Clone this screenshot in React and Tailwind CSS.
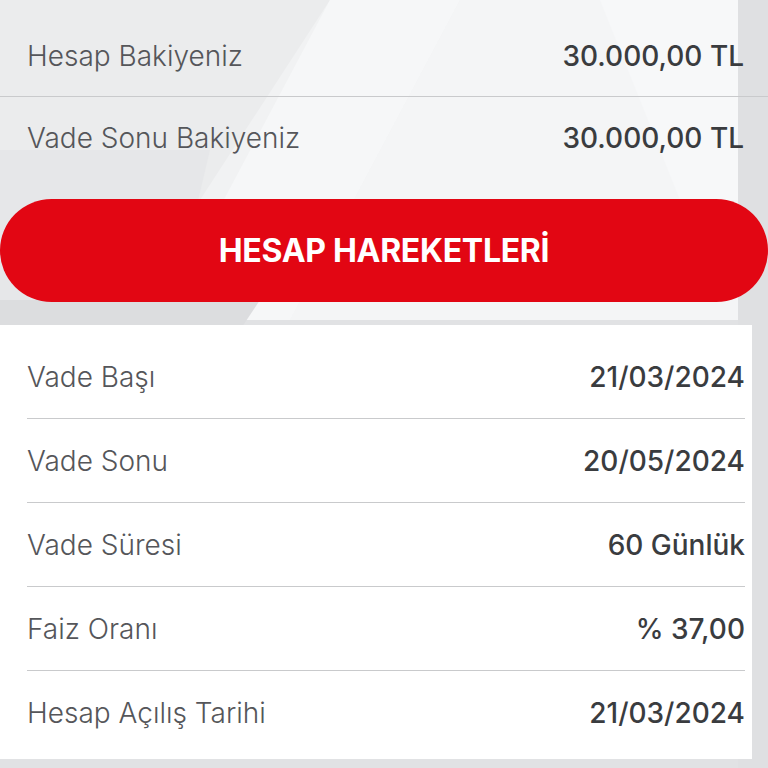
import React from "react";

const topRows = [
  { label: "Hesap Bakiyeniz", value: "30.000,00 TL" },
  { label: "Vade Sonu Bakiyeniz", value: "30.000,00 TL" },
];

const details = [
  { label: "Vade Başı", value: "21/03/2024" },
  { label: "Vade Sonu", value: "20/05/2024" },
  { label: "Vade Süresi", value: "60 Günlük" },
  { label: "Faiz Oranı", value: "% 37,00" },
  { label: "Hesap Açılış Tarihi", value: "21/03/2024" },
];

const Backdrop = () => (
  <svg
    className="absolute inset-0 w-full h-full"
    viewBox="0 0 768 768"
    preserveAspectRatio="none"
  >
    <rect x="0" y="0" width="768" height="768" fill="#e1e2e4" />
    <path d="M0 -20 H738 V320 H0 Z" fill="#f1f2f3" />
    <polygon points="0,0 330,0 200,200 0,200" fill="#ebeced" />
    <polygon points="330,0 460,0 290,320 160,320" fill="#f6f7f8" />
    <polygon points="460,0 738,0 738,320 290,320" fill="#f4f5f6" />
    <polygon points="0,150 210,150 170,320 0,320" fill="#e6e7e9" />
    <polygon points="600,0 738,0 738,200 680,200" fill="#f7f8f9" />
    <rect x="738" y="0" width="30" height="768" fill="#dfe0e2" />
    <polygon points="0,300 260,300 240,330 0,330" fill="#dcdddf" />
  </svg>
);

const App = () => {
  return (
    <div
      className="relative w-[768px] h-[768px] overflow-hidden"
      style={{ fontFamily: "Inter, 'Liberation Sans', sans-serif" }}
    >
      <Backdrop />
      <div className="relative flex flex-col">
        <div className="pt-[15px]">
          {topRows.map((row, i) => (
            <div
              key={row.label}
              className={
                i === 0
                  ? "h-[82px] flex items-center justify-between pl-[27px] pr-[24px] border-b border-[#c9cacc]"
                  : "h-[82px] flex items-center justify-between pl-[27px] pr-[24px]"
              }
            >
              <span className="text-[28px] font-light text-[#55565a]">
                {row.label}
              </span>
              <span className="text-[28px] font-medium text-[#3a3c3f]">
                {row.value}
              </span>
            </div>
          ))}
        </div>
        <button
          type="button"
          className="mt-[20px] h-[103px] w-[768px] rounded-full bg-[#e20613] text-white text-[32px] font-bold tracking-[-0.3px] flex items-center justify-center"
        >
          HESAP HAREKETLERİ
        </button>
        <div className="mt-[23px] w-[752px] bg-white pt-[10px] pb-[5px] pl-[27px] pr-[7px]">
          {details.map((row, i) => (
            <div
              key={row.label}
              className={
                i < details.length - 1
                  ? "h-[84px] flex items-center justify-between border-b border-[#c9cacc]"
                  : "h-[83px] flex items-center justify-between"
              }
            >
              <span className="text-[28px] font-light text-[#55565a]">
                {row.label}
              </span>
              <span className="text-[28px] font-medium text-[#3a3c3f]">
                {row.value}
              </span>
            </div>
          ))}
        </div>
      </div>
    </div>
  );
};

export default App;
